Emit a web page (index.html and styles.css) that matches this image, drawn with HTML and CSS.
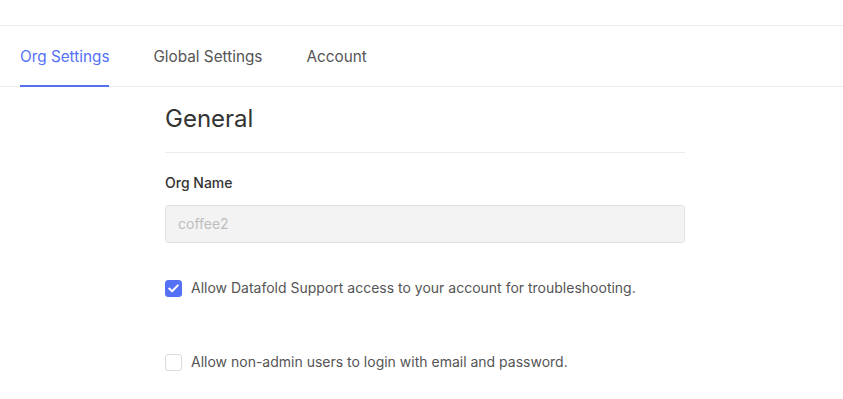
FILE: index.html
```html
<!DOCTYPE html>
<html>
<head>
<meta charset="utf-8">
<link rel="stylesheet" href="styles.css">
</head>
<body>
<div class="topbar"></div>
<nav class="tabs">
  <div class="tab active">Org Settings</div>
  <div class="tab">Global Settings</div>
  <div class="tab">Account</div>
</nav>
<main class="content">
  <h2 class="heading">General</h2>
  <label class="label">Org Name</label>
  <div class="input">coffee2</div>
  <div class="check-row first">
    <span class="box checked">
      <svg width="11" height="9" viewBox="0 0 11 9"><path d="M1.2 4.6 L4.1 7.3 L9.8 1.4" fill="none" stroke="#fff" stroke-width="2" stroke-linecap="round" stroke-linejoin="round"/></svg>
    </span>
    <span class="check-text">Allow Datafold Support access to your account for troubleshooting.</span>
  </div>
  <div class="check-row second">
    <span class="box"></span>
    <span class="check-text">Allow non-admin users to login with email and password.</span>
  </div>
</main>
</body>
</html>
```
FILE: styles.css
```css
* { box-sizing: border-box; }
html, body { margin: 0; padding: 0; background: #fff; }
body { font-family: Inter, "Noto Sans", sans-serif; color: #333; }
.topbar { height: 26px; border-bottom: 1px solid #ebebeb; }
.tabs {
  display: flex;
  gap: 44px;
  padding: 0 20px;
  height: 61px;
  border-bottom: 1px solid #ebebeb;
}
.tab {
  font-size: 15.3px;
  line-height: 61px;
  color: #555;
  height: 61px;
  margin-bottom: -1px;
}
.tab.active {
  color: #5470f5;
  border-bottom: 2px solid #5470f5;
}
.content {
  width: 520px;
  margin-left: 165px;
}
.heading {
  margin: 16px 0 0;
  font-size: 24px;
  font-weight: 400;
  line-height: 32px;
  color: #333;
  padding-bottom: 17px;
  border-bottom: 1px solid #ebebeb;
}
.label {
  display: block;
  margin-top: 20px;
  font-size: 14px;
  line-height: 20px;
  font-weight: 500;
  color: #333;
}
.input {
  margin-top: 12px;
  height: 38px;
  border: 1px solid #e3e3e3;
  border-radius: 3px;
  background: #f3f3f3;
  color: #bdbdbd;
  font-size: 14px;
  line-height: 36px;
  padding-left: 12px;
}
.check-row {
  display: flex;
  align-items: center;
  height: 20px;
  gap: 9px;
}
.check-row.first { margin-top: 35px; }
.check-row.second { margin-top: 54px; }
.box {
  width: 17px;
  height: 17px;
  border: 1px solid #dcdcdc;
  border-radius: 3px;
  background: #fff;
  display: flex;
  align-items: center;
  justify-content: center;
  flex-shrink: 0;
}
.box.checked { background: #5470f5; border-color: #5470f5; }
.check-text { font-size: 14px; color: #555; line-height: 20px; }
```
